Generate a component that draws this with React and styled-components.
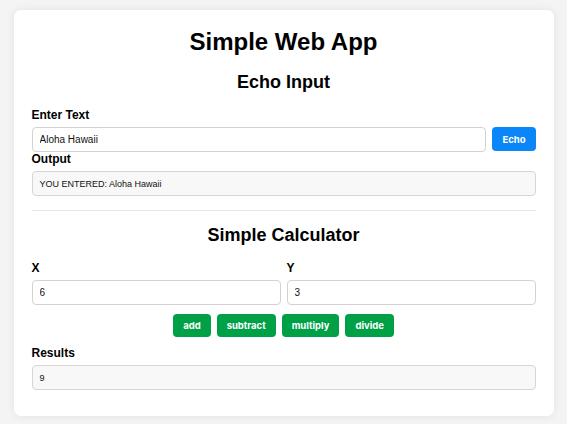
import React, { useState } from "react";
import styled, { createGlobalStyle } from "styled-components";

const Global = createGlobalStyle`
  html, body { margin: 0; padding: 0; background: #f4f4f4; }
  body { font-family: "Liberation Sans", Arial, sans-serif; color: #000; }
  * { box-sizing: border-box; }
`;

const Page = styled.div`
  padding: 10px 0 9px;
`;

const Card = styled.main`
  width: 540px;
  margin: 0 auto;
  background: #fff;
  border-radius: 7px;
  box-shadow: 0 0 10px rgba(0, 0, 0, 0.08);
  padding: 18px 18px 26px;
`;

const Title = styled.h1`
  margin: 0;
  font-size: 24px;
  font-weight: 700;
  text-align: center;
  line-height: 28px;
`;

const SectionTitle = styled.h2`
  margin: ${(p) => p.$top || 0}px 0 15px;
  font-size: 18px;
  font-weight: 700;
  text-align: center;
  line-height: 21px;
`;

const Label = styled.label`
  display: block;
  font-size: 12px;
  font-weight: 700;
  line-height: 14px;
  margin-bottom: 5px;
`;

const Row = styled.div`
  display: flex;
  gap: 6px;
  align-items: stretch;
`;

const Grid = styled.div`
  display: grid;
  grid-template-columns: 1fr 1fr;
  gap: 6px;
`;

const Field = styled.input`
  flex: 1 1 auto;
  min-width: 0;
  width: 100%;
  height: 25px;
  border: 1px solid #d2d2d2;
  border-radius: 4px;
  padding: 0 7px;
  font-family: "Liberation Sans", Arial, sans-serif;
  font-size: 10px;
  color: #111;
  background: #fff;
  outline: none;
`;

const Box = styled.div`
  height: 25px;
  border: 1px solid #d6d6d6;
  border-radius: 4px;
  padding: 0 7px;
  background: #f8f8f8;
  font-size: 9px;
  color: #111;
  display: flex;
  align-items: center;
`;

const Button = styled.button`
  flex: none;
  border: none;
  border-radius: 4px;
  height: ${(p) => p.$h || 23}px;
  padding: 0 10px;
  background: ${(p) => (p.$variant === "blue" ? "#0a86f8" : "#00a047")};
  color: #fff;
  font-family: Inter, "Noto Sans", sans-serif;
  font-weight: 700;
  font-size: 9.5px;
  cursor: pointer;
`;

const Divider = styled.hr`
  border: none;
  border-top: 1px solid #e6e6e6;
  margin: 14px 0 0;
`;

const Col = styled.div`
  display: flex;
  flex-direction: column;
`;

const Buttons = styled.div`
  display: flex;
  justify-content: center;
  gap: 6px;
  margin: 9px 0 9px;
`;

export default function App() {
  const [text, setText] = useState("Aloha Hawaii");
  const [out, setOut] = useState("YOU ENTERED: Aloha Hawaii");
  const [x, setX] = useState("6");
  const [y, setY] = useState("3");
  const [res, setRes] = useState("9");

  const calc = (op) => {
    const a = parseFloat(x), b = parseFloat(y);
    const r = op === "add" ? a + b : op === "subtract" ? a - b : op === "multiply" ? a * b : a / b;
    setRes(String(r));
  };

  return (
    <Page>
      <Global />
      <Card>
        <Title>Simple Web App</Title>
        <SectionTitle $top={16}>Echo Input</SectionTitle>
        <Label>Enter Text</Label>
        <Row>
          <Field value={text} onChange={(e) => setText(e.target.value)} />
          <Button $variant="blue" $h={24} onClick={() => setOut("YOU ENTERED: " + text)}>Echo</Button>
        </Row>
        <Label>Output</Label>
        <Box>{out}</Box>
        <Divider />
        <SectionTitle $top={14}>Simple Calculator</SectionTitle>
        <Grid>
          <Col>
            <Label>X</Label>
            <Field value={x} onChange={(e) => setX(e.target.value)} />
          </Col>
          <Col>
            <Label>Y</Label>
            <Field value={y} onChange={(e) => setY(e.target.value)} />
          </Col>
        </Grid>
        <Buttons>
          {["add", "subtract", "multiply", "divide"].map((op) => (
            <Button key={op} onClick={() => calc(op)}>{op}</Button>
          ))}
        </Buttons>
        <Label>Results</Label>
        <Box>{res}</Box>
      </Card>
    </Page>
  );
}
